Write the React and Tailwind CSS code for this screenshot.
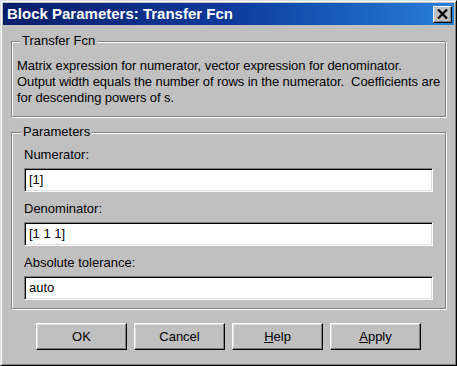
import React from "react";

const font = { fontFamily: '"Liberation Sans", Arial, sans-serif' };

const Field = ({ label, value, first }) => (
  <div className={first ? "" : "mt-[9px]"}>
    <div className="h-[16px] leading-[16px] mb-[5px]">{label}</div>
    <div className="h-[24px] bg-white border border-t-[#808080] border-l-[#808080] border-r-white border-b-white shadow-[inset_1px_1px_0_#000,inset_-1px_-1px_0_#dfdfdf] pl-[4px] leading-[22px]">
      {value}
    </div>
  </div>
);

const Button = ({ children }) => (
  <button className="w-[91px] h-[27px] bg-[#c0c0c0] border border-t-white border-l-white border-r-black border-b-black shadow-[inset_-1px_-1px_0_#808080,inset_1px_1px_0_#dfdfdf] text-[13px] text-black leading-[25px]">
    {children}
  </button>
);

export default function App() {
  return (
    <div
      style={font}
      className="w-[457px] h-[366px] bg-[#c0c0c0] border border-t-[#dfdfdf] border-l-[#dfdfdf] border-r-black border-b-black shadow-[inset_1px_1px_0_#fff,inset_-1px_-1px_0_#808080] p-[2px] text-[13px] text-black flex flex-col"
    >
      {/* Title bar */}
      <div className="h-[22px] flex items-center justify-between pl-[4px] pr-[2px] bg-gradient-to-r from-[#0a1e6a] via-[#0d3a9c] to-[#2a7fd8]">
        <span className="text-white font-bold text-[15px] leading-[22px]">
          Block Parameters: Transfer Fcn
        </span>
        <div className="w-[19px] h-[17px] flex items-center justify-center bg-[#c0c0c0] border border-t-white border-l-white border-r-black border-b-black shadow-[inset_-1px_-1px_0_#808080]">
          <svg width="11" height="10" viewBox="0 0 11 10">
            <path d="M1 0.5 L10 9.5 M10 0.5 L1 9.5" stroke="#000" strokeWidth="2.3" />
          </svg>
        </div>
      </div>

      <div className="px-[8px]">
        {/* Transfer Fcn group */}
        <div className="relative mt-[16px] border border-[#808080] shadow-[inset_1px_1px_0_#fff,1px_1px_0_#fff] pt-[16px] pb-[10px] pl-[5px] pr-[5px]">
          <span className="absolute -top-[9px] left-[8px] px-[2px] bg-[#c0c0c0] leading-[16px]">
            Transfer Fcn
          </span>
          <div className="leading-[16px] whitespace-pre tracking-[-0.07px]">
            <div>Matrix expression for numerator, vector expression for denominator.</div>
            <div>Output width equals the number of rows in the numerator.  Coefficients are</div>
            <div>for descending powers of s.</div>
          </div>
        </div>

        {/* Parameters group */}
        <div className="relative mt-[15px] border border-[#808080] shadow-[inset_1px_1px_0_#fff,1px_1px_0_#fff] pt-[14px] pb-[8px] px-[12px]">
          <span className="absolute -top-[9px] left-[9px] px-[2px] bg-[#c0c0c0] leading-[16px]">
            Parameters
          </span>
          <Field first label="Numerator:" value="[1]" />
          <Field label="Denominator:" value="[1 1 1]" />
          <Field label="Absolute tolerance:" value="auto" />
        </div>

        {/* Buttons */}
        <div className="mt-[14px] flex justify-center gap-[7px]">
          <Button>OK</Button>
          <Button>Cancel</Button>
          <Button>
            <span className="underline">H</span>elp
          </Button>
          <Button>
            <span className="underline">A</span>pply
          </Button>
        </div>
      </div>
    </div>
  );
}
